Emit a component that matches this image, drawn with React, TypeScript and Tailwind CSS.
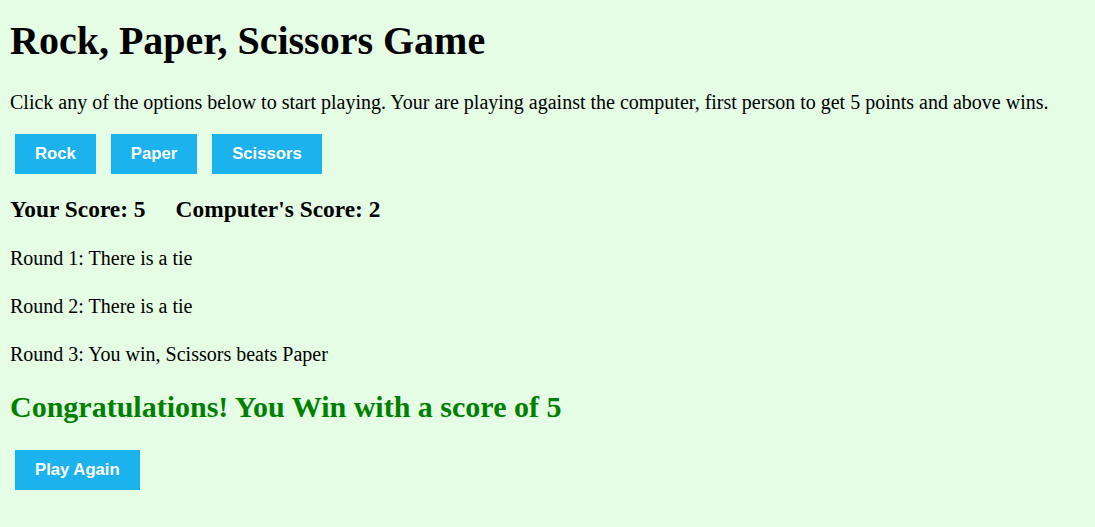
import React from "react"

const rounds = [
  "Round 1: There is a tie",
  "Round 2: There is a tie",
  "Round 3: You win, Scissors beats Paper",
]

function GameButton({ label }: { label: string }) {
  return (
    <button className="h-[40px] px-[20px] bg-[#1bb2ee] text-white font-bold text-[16.7px] font-['Liberation_Sans',Arial,sans-serif] leading-none">
      {label}
    </button>
  )
}

export default function App() {
  return (
    <div className="min-h-[527px] w-full bg-[#e5fce5] text-black font-['Liberation_Serif','Times_New_Roman',serif] px-[10px] pt-[18px] pb-[20px]">
      {/* Header */}
      <h1 className="text-[40px] leading-[46px] font-bold">Rock, Paper, Scissors Game</h1>
      <p className="mt-[27px] text-[20px] leading-[23px]">
        Click any of the options below to start playing. Your are playing against the computer, first person to get 5 points and above wins.
      </p>

      {/* Choices */}
      <div className="mt-[20px] ml-[5px] flex gap-[15px]">
        <GameButton label="Rock" />
        <GameButton label="Paper" />
        <GameButton label="Scissors" />
      </div>

      {/* Score */}
      <div className="mt-[22px] flex gap-[30px] text-[23.4px] leading-[27px] font-bold">
        <span>Your Score: 5</span>
        <span>Computer's Score: 2</span>
      </div>

      {/* Round results */}
      <div className="mt-[24px] flex flex-col gap-[25px] text-[20px] leading-[23px]">
        {rounds.map((r, i) => (
          <p key={i}>{r}</p>
        ))}
      </div>

      <h2 className="mt-[23px] text-[30px] leading-[35px] font-bold text-[#008000]">
        Congratulations! You Win with a score of 5
      </h2>

      <div className="mt-[26px] ml-[5px] flex">
        <GameButton label="Play Again" />
      </div>
    </div>
  )
}
